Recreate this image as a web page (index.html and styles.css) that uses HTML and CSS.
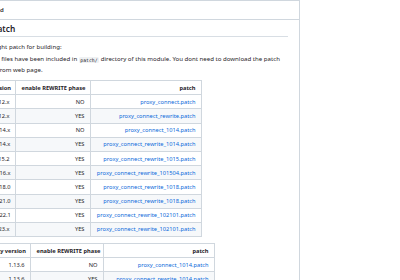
FILE: index.html
```html
<!DOCTYPE html>
<html lang="en">
<head>
<meta charset="utf-8">
<title>README</title>
<link rel="stylesheet" href="styles.css">
</head>
<body>
<div class="layout">
  <div class="readme">
    <div class="readme-head">README.md</div>
    <article class="markdown">
      <h2>Select patch</h2>
      <ul>
        <li>Select right patch for building:</li>
        <li>All patch files have been included in <code>patch/</code> directory of this module. You dont need to download the patch directly from web page.</li>
      </ul>
      <table class="t-nginx">
        <colgroup><col class="c1"><col class="c2"><col class="c3"></colgroup>
        <thead>
          <tr><th>nginx version</th><th>enable REWRITE phase</th><th>patch</th></tr>
        </thead>
        <tbody>
          <tr><td>1.4.x ~ 1.12.x</td><td>NO</td><td><a href="#">proxy_connect.patch</a></td></tr>
          <tr><td>1.4.x ~ 1.12.x</td><td>YES</td><td><a href="#">proxy_connect_rewrite.patch</a></td></tr>
          <tr><td>1.13.x ~ 1.14.x</td><td>NO</td><td><a href="#">proxy_connect_1014.patch</a></td></tr>
          <tr><td>1.13.x ~ 1.14.x</td><td>YES</td><td><a href="#">proxy_connect_rewrite_1014.patch</a></td></tr>
          <tr><td>1.15.2</td><td>YES</td><td><a href="#">proxy_connect_rewrite_1015.patch</a></td></tr>
          <tr><td>1.15.4 ~ 1.16.x</td><td>YES</td><td><a href="#">proxy_connect_rewrite_101504.patch</a></td></tr>
          <tr><td>1.17.x ~ 1.18.0</td><td>YES</td><td><a href="#">proxy_connect_rewrite_1018.patch</a></td></tr>
          <tr><td>1.19.x ~ 1.21.0</td><td>YES</td><td><a href="#">proxy_connect_rewrite_1018.patch</a></td></tr>
          <tr><td>1.21.1 ~ 1.22.1</td><td>YES</td><td><a href="#">proxy_connect_rewrite_102101.patch</a></td></tr>
          <tr><td>1.23.x</td><td>YES</td><td><a href="#">proxy_connect_rewrite_102101.patch</a></td></tr>
        </tbody>
      </table>
      <table class="t-openresty">
        <colgroup><col class="c1"><col class="c2"><col class="c3"></colgroup>
        <thead>
          <tr><th>OpenResty version</th><th>enable REWRITE phase</th><th>patch</th></tr>
        </thead>
        <tbody>
          <tr><td>1.13.6</td><td>NO</td><td><a href="#">proxy_connect_1014.patch</a></td></tr>
          <tr><td>1.13.6</td><td>YES</td><td><a href="#">proxy_connect_rewrite_1014.patch</a></td></tr>
          <tr><td>1.15.8</td><td>YES</td><td><a href="#">proxy_connect_rewrite_101504.patch</a></td></tr>
        </tbody>
      </table>
    </article>
  </div>
  <aside class="side"></aside>
</div>
</body>
</html>
```

FILE: styles.css
```css
* { box-sizing: border-box; }
html, body { margin: 0; padding: 0; background: #ffffff; }
body {
  font-family: "Noto Sans", "Open Sans", sans-serif;
  font-size: 6.1px;
  color: #1f2328;
  overflow: hidden;
  width: 400px;
  height: 280px;
}
.layout { display: flex; align-items: stretch; }
.readme {
  flex: none;
  width: 334px;
  margin-left: -34px;
  border-top: 1px solid #d0d7de;
  border-right: 1px solid #d0d7de;
  min-height: 300px;
}
.readme-head {
  height: 19px;
  line-height: 19px;
  border-bottom: 1px solid #d0d7de;
  padding-left: 2px;
  font-weight: 600;
  font-size: 6px;
}
.markdown { padding: 0 11px 0 0; }
.markdown h2 {
  margin: 3px 0 0;
  font-size: 8.3px;
  font-weight: 600;
  line-height: 12px;
  padding-bottom: 1px;
  border-bottom: 1px solid #d8dee4;
}
.markdown ul {
  margin: 5px 0 0;
  padding-left: 9px;
  list-style: disc;
}
.markdown li { line-height: 10px; }
.markdown li + li { margin-top: 2px; }
.markdown code {
  font-family: "DejaVu Sans Mono", monospace;
  font-size: 4.8px;
  background: rgba(175, 184, 193, 0.2);
  border-radius: 1.5px;
  padding: 0.5px 1.5px;
}
.markdown table {
  border-collapse: collapse;
  border-spacing: 0;
  table-layout: fixed;
  margin-top: 5px;
  font-size: 5.7px;
}
.markdown table + table { margin-top: 6px; }
.t-nginx { width: 235px; }
.t-nginx .c1 { width: 49px; }
.t-nginx .c2 { width: 75px; }
.t-nginx .c3 { width: 111px; }
.t-openresty { width: 248px; }
.t-openresty .c1 { width: 64px; }
.t-openresty .c2 { width: 73px; }
.t-openresty .c3 { width: 111px; }
.markdown th, .markdown td {
  border: 1px solid #d0d7de;
  padding: 1.6px 5.5px;
  line-height: 10px;
  text-align: right;
  white-space: nowrap;
  overflow: hidden;
}
.markdown th { font-weight: 700; }
.markdown tbody tr:nth-child(2n) { background: #f6f8fa; }
.markdown a { color: #0969da; text-decoration: none; }
.side { flex: 1; }
```
